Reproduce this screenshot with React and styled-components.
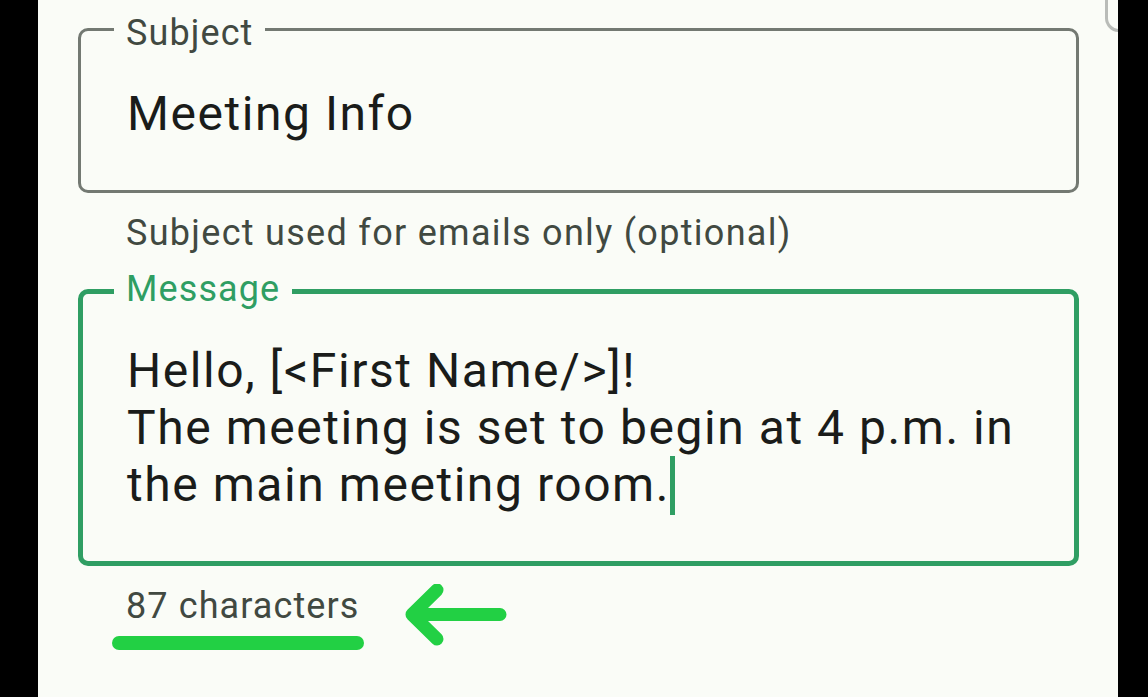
import React from "react";
import styled, { createGlobalStyle } from "styled-components";

const GlobalStyle = createGlobalStyle`
    html, body {
        margin: 0;
        padding: 0;
        background: #000;
        overflow: hidden;
    }
    * {
        box-sizing: border-box;
    }
`

export default function App() {
    return (
        <>
            <GlobalStyle />
            <Screen>
                <Sheet>
                    <ScrollEdge />

                    <Field $tone="idle">
                        <Label $tone="idle" $shift="top">Subject</Label>
                        <Value>Meeting Info</Value>
                    </Field>
                    <Helper>Subject used for emails only (optional)</Helper>

                    <Field $tone="focus" $gap={20}>
                        <Label $tone="focus" $shift="bottom">Message</Label>
                        <Value>
                            Hello, [&lt;First Name/&gt;]!
                            <br />
                            The meeting is set to begin at 4 p.m. in
                            <br />
                            the main meeting room.<Caret />
                        </Value>
                    </Field>

                    <CounterRow>
                        <Counter>87 characters</Counter>
                        <Arrow viewBox="0 0 110 70" width="110" height="70">
                            <path
                                d="M35 6 L10 30.5 L35 55 M10 30.5 L98 30.5"
                                fill="none"
                                stroke="#22d044"
                                strokeWidth="13"
                                strokeLinecap="round"
                                strokeLinejoin="round"
                            />
                        </Arrow>
                    </CounterRow>
                </Sheet>
            </Screen>
        </>
    )
}

const Screen = styled.div`
    width: 1148px;
    height: 697px;
    display: flex;
    background: #000;
`

const Sheet = styled.div`
    position: relative;
    overflow: hidden;
    margin-left: 38px;
    width: 1080px;
    height: 697px;
    padding: 8px 40px 0 40px;
    background: #fafcf7;
    font-family: Roboto, "Liberation Sans", sans-serif;
    display: flex;
    flex-direction: column;
`

const ScrollEdge = styled.div`
    position: absolute;
    top: -20px;
    left: 1067px;
    width: 40px;
    height: 52px;
    border-left: 3px solid #b9bcb8;
    border-bottom: 3px solid #b9bcb8;
    border-bottom-left-radius: 14px;
`

const Field = styled.fieldset`
    margin: ${p => p.$gap || 0}px 0 0 0;
    width: 1001px;
    min-width: 0;
    border: ${p => p.$tone === "focus" ? "5px solid #2f9e63" : "3px solid #737972"};
    border-radius: 10px;
    padding: ${p => p.$tone === "focus" ? "30px 40px 46px 44px" : "34px 40px 48px 46px"};
`

const Label = styled.legend`
    margin-left: -13px;
    padding: ${p => p.$shift === "top" ? "7px 12px 0" : "0 12px 5px"};
    font-size: 36px;
    line-height: 36px;
    letter-spacing: 1.1px;
    color: ${p => p.$tone === "focus" ? "#2f9e63" : "#414941"};
`

const Value = styled.div`
    font-size: 48px;
    line-height: 57px;
    letter-spacing: 1.55px;
    color: #1a1c1a;
    white-space: nowrap;
`

const Caret = styled.span`
    display: inline-block;
    width: 5px;
    height: 59px;
    vertical-align: -14px;
    background: #2f9e63;
`

const Helper = styled.div`
    margin-top: 22px;
    padding-left: 48px;
    font-size: 36px;
    line-height: 36px;
    letter-spacing: 1.3px;
    color: #414941;
`

const CounterRow = styled.div`
    margin-top: 22px;
    padding-left: 48px;
    display: flex;
    align-items: flex-start;
`

const Counter = styled.div`
    position: relative;
    font-size: 36px;
    line-height: 36px;
    letter-spacing: 1.1px;
    color: #414941;
    &::after {
        content: "";
        position: absolute;
        left: -14px;
        right: -4px;
        top: 48px;
        height: 14px;
        border-radius: 7px;
        background: #22d044;
    }
`

const Arrow = styled.svg`
    margin-left: 42px;
    margin-top: -4px;
    flex: none;
`
